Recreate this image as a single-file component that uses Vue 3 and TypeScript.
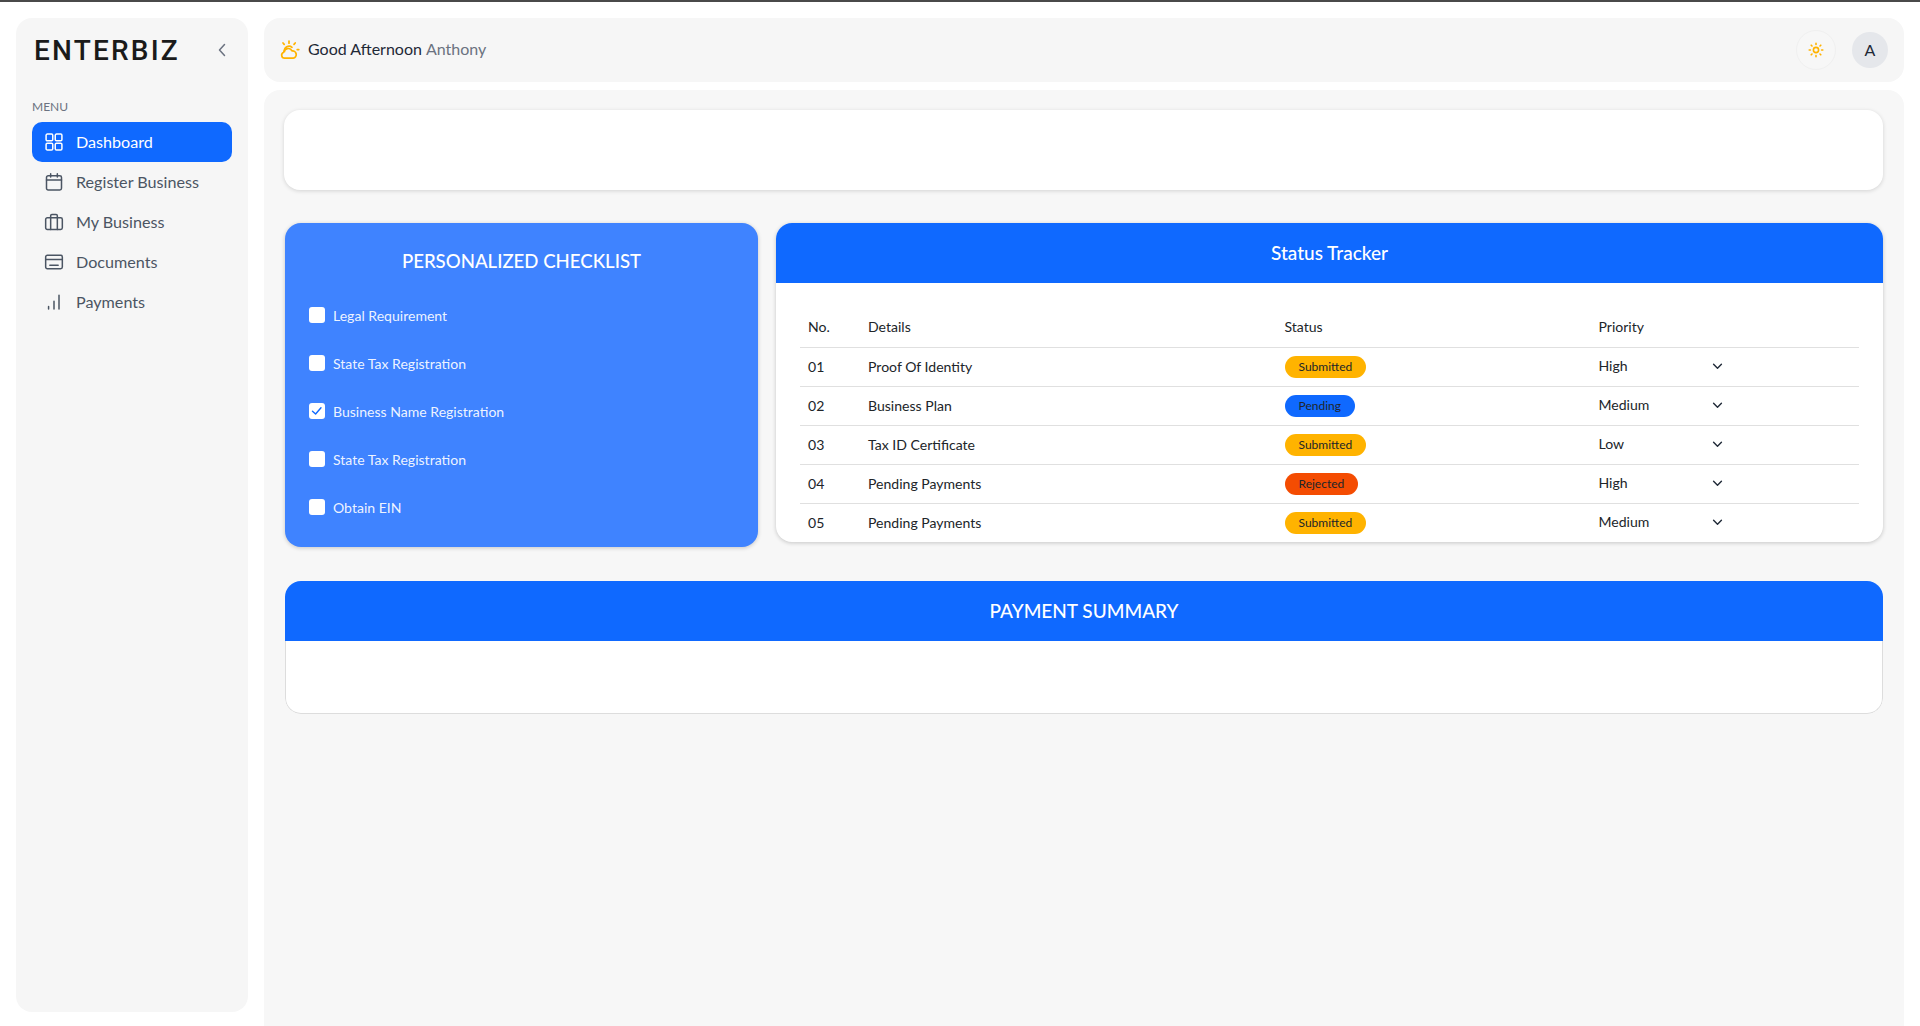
<script setup lang="ts">
const menu = [
  { label: 'Dashboard', icon: 'grid', active: true },
  { label: 'Register Business', icon: 'calendar' },
  { label: 'My Business', icon: 'case' },
  { label: 'Documents', icon: 'card' },
  { label: 'Payments', icon: 'bars' },
]

const checklist = [
  { label: 'Legal Requirement', done: false },
  { label: 'State Tax Registration', done: false },
  { label: 'Business Name Registration', done: true },
  { label: 'State Tax Registration', done: false },
  { label: 'Obtain EIN', done: false },
]

const rows = [
  { no: '01', details: 'Proof Of Identity', status: 'Submitted', priority: 'High' },
  { no: '02', details: 'Business Plan', status: 'Pending', priority: 'Medium' },
  { no: '03', details: 'Tax ID Certificate', status: 'Submitted', priority: 'Low' },
  { no: '04', details: 'Pending Payments', status: 'Rejected', priority: 'High' },
  { no: '05', details: 'Pending Payments', status: 'Submitted', priority: 'Medium' },
]
</script>

<template>
  <div class="page">
    <div class="topline"></div>
    <div class="shell">
      <aside class="sidebar">
        <div class="brand">
          <span class="logo">ENTERBIZ</span>
          <svg class="back" viewBox="0 0 10 14" fill="none" stroke="currentColor" stroke-width="1.5" stroke-linecap="round" stroke-linejoin="round">
            <path d="M7.5 1.5 2.5 7l5 5.5" />
          </svg>
        </div>
        <div class="menu-label">MENU</div>
        <nav class="menu">
          <a v-for="item in menu" :key="item.label" class="menu-item" :class="{ active: item.active }">
            <svg class="menu-icon" viewBox="0 0 24 24" fill="none" stroke="currentColor" stroke-width="1.8" stroke-linecap="round" stroke-linejoin="round">
              <template v-if="item.icon === 'grid'">
                <rect x="2.5" y="2.5" width="8" height="8" rx="1.5" />
                <rect x="13.5" y="2.5" width="8" height="8" rx="1.5" />
                <rect x="2.5" y="13.5" width="8" height="8" rx="1.5" />
                <rect x="13.5" y="13.5" width="8" height="8" rx="1.5" />
              </template>
              <template v-else-if="item.icon === 'calendar'">
                <rect x="3" y="4.5" width="18" height="17" rx="2" />
                <path d="M3 9.5h18M8 2v4M16 2v4" />
              </template>
              <template v-else-if="item.icon === 'case'">
                <rect x="2" y="7" width="20" height="14" rx="2" />
                <path d="M8 21V4.5A1.5 1.5 0 0 1 9.5 3h5A1.5 1.5 0 0 1 16 4.5V21" />
              </template>
              <template v-else-if="item.icon === 'card'">
                <rect x="2" y="4" width="20" height="16" rx="2" />
                <path d="M2 9h20M7 16h10" />
              </template>
              <template v-else>
                <path d="M5.5 17.5v3M12 11v9.5M18 4v16.5" />
              </template>
            </svg>
            <span class="menu-text">{{ item.label }}</span>
          </a>
        </nav>
      </aside>

      <div class="content">
        <header class="header">
          <div class="greeting">
            <svg class="weather" viewBox="0 0 20 20" fill="none" stroke="#ffb300" stroke-width="1.7" stroke-linecap="round" stroke-linejoin="round">
              <path d="M4.6 18.2a3.1 3.1 0 0 1-.9-6A4.4 4.4 0 0 1 12 11a3.6 3.6 0 0 1 1.2 7.2z" />
              <path d="M4.5 11.5a4.6 4.6 0 0 1 7.5-4.2" />
              <path d="M9 1v2.2M3 3l1.2 1.4M15.2 3 14 4.4M17.2 9.6h1.6" />
            </svg>
            <span class="hello">Good Afternoon</span>
            <span class="name">Anthony</span>
          </div>
          <div class="header-actions">
            <button class="theme-btn">
              <svg viewBox="0 0 16 16" fill="none" stroke="#ffb300" stroke-width="1.6" stroke-linecap="round">
                <circle cx="8" cy="8" r="2.6" />
                <path d="M8 1.2v1.2M8 13.6v1.2M1.2 8h1.2M13.6 8h1.2M3.2 3.2l.8.8M12 12l.8.8M3.2 12.8l.8-.8M12 4l.8-.8" />
              </svg>
            </button>
            <div class="avatar">A</div>
          </div>
        </header>

        <main class="main">
          <div class="banner"></div>

          <div class="cards">
            <section class="checklist">
              <h3>PERSONALIZED CHECKLIST</h3>
              <label v-for="(task, i) in checklist" :key="i" class="task">
                <span class="box">
                  <svg v-if="task.done" viewBox="0 0 16 16" fill="none" stroke="#0f69ff" stroke-width="1.4" stroke-linecap="round" stroke-linejoin="round">
                    <path d="M3.5 8.2 6.6 11 12 4.8" />
                  </svg>
                </span>
                {{ task.label }}
              </label>
            </section>

            <section class="tracker">
              <div class="card-head">Status Tracker</div>
              <div class="table-wrap">
                <table>
                  <colgroup>
                    <col class="col-no" />
                    <col class="col-details" />
                    <col class="col-status" />
                    <col />
                  </colgroup>
                  <thead>
                    <tr>
                      <th>No.</th>
                      <th>Details</th>
                      <th>Status</th>
                      <th>Priority</th>
                    </tr>
                  </thead>
                  <tbody>
                    <tr v-for="row in rows" :key="row.no">
                      <td>{{ row.no }}</td>
                      <td>{{ row.details }}</td>
                      <td class="status-cell"><span class="badge" :class="row.status.toLowerCase()">{{ row.status }}</span></td>
                      <td>
                        <div class="priority">
                          <span>{{ row.priority }}</span>
                          <svg viewBox="0 0 12 8" fill="none" stroke="#1f2937" stroke-width="1.6" stroke-linecap="round" stroke-linejoin="round">
                            <path d="M1.5 1.5 6 6l4.5-4.5" />
                          </svg>
                        </div>
                      </td>
                    </tr>
                  </tbody>
                </table>
              </div>
            </section>
          </div>

          <section class="payment">
            <div class="card-head">PAYMENT SUMMARY</div>
            <div class="payment-body"></div>
          </section>
        </main>
      </div>
    </div>
  </div>
</template>

<style scoped>
.page {
  display: flex;
  flex-direction: column;
  height: 100vh;
  overflow: hidden;
  background: #fff;
  color: #212529;
  font-family: Lato, "Noto Sans", sans-serif;
}

.topline {
  height: 2px;
  flex: none;
  background: #4a4a4a;
}

.shell {
  flex: 1;
  display: flex;
  gap: 16px;
  min-height: 0;
  padding: 16px 16px 0;
}

.sidebar {
  width: 232px;
  flex: none;
  box-sizing: border-box;
  margin-bottom: 14px;
  padding: 0 16px;
  border-radius: 16px;
  background: #f6f6f6;
}

.brand {
  display: flex;
  align-items: center;
  justify-content: space-between;
  height: 64px;
  padding: 0 5px 0 2px;
}

.logo {
  font-family: Roboto, sans-serif;
  font-size: 28px;
  font-weight: 500;
  letter-spacing: 2.2px;
  color: #1a1a1a;
}

.back {
  width: 10px;
  height: 14px;
  color: #6b7280;
}

.menu-label {
  margin-top: 15px;
  height: 25px;
  line-height: 20px;
  font-size: 12px;
  color: #6b7280;
}

.menu {
  display: flex;
  flex-direction: column;
}

.menu-item {
  display: flex;
  align-items: center;
  gap: 12px;
  height: 40px;
  padding: 0 12px;
  border-radius: 10px;
  font-size: 16.15px;
  color: #4b5563;
}

.menu-text {
  margin-top: -2px;
}

.menu-item.active {
  background: #0f69ff;
  color: #fff;
}

.menu-icon {
  width: 20px;
  height: 20px;
  flex: none;
}

.content {
  flex: 1;
  min-width: 0;
  display: flex;
  flex-direction: column;
  gap: 8px;
}

.header {
  display: flex;
  align-items: center;
  justify-content: space-between;
  height: 64px;
  flex: none;
  padding: 0 16px;
  border-radius: 16px;
  background: #f6f6f6;
}

.greeting {
  display: flex;
  align-items: center;
  font-size: 16px;
  line-height: 18px;
}

.weather {
  width: 20px;
  height: 20px;
  margin-right: 8px;
}

.hello {
  color: #1f2937;
  margin: -2px 4px 0 0;
}

.name {
  margin-top: -2px;
  color: #6b7280;
}

.header-actions {
  display: flex;
  align-items: center;
  gap: 16px;
}

.theme-btn {
  display: flex;
  align-items: center;
  justify-content: center;
  width: 40px;
  height: 40px;
  padding: 0;
  border: 1px solid #f0f0f0;
  border-radius: 50%;
  background: #f7f7f7;
}

.theme-btn svg {
  width: 16px;
  height: 16px;
}

.avatar {
  display: flex;
  align-items: center;
  justify-content: center;
  width: 36px;
  height: 36px;
  padding-bottom: 2px;
  box-sizing: border-box;
  border-radius: 50%;
  background: #e5e7eb;
  color: #1f2937;
  font-size: 16px;
}

.main {
  flex: 1;
  box-sizing: border-box;
  padding: 20px 21px 0 20px;
  border-radius: 16px 16px 0 0;
  background: #f7f7f7;
}

.banner {
  height: 80px;
  border-radius: 16px;
  background: #fff;
  box-shadow: 0 1px 4px rgba(0, 0, 0, 0.15);
}

.cards {
  display: flex;
  align-items: flex-start;
  gap: 18px;
  margin: 33px 0 0 1px;
}

.checklist {
  width: 473px;
  flex: none;
  box-sizing: border-box;
  height: 324px;
  padding: 24px 24px 16px;
  border-radius: 16px;
  background: #3f83ff;
  color: #fff;
  box-shadow: 0 1px 4px rgba(0, 0, 0, 0.2);
}

.checklist h3 {
  margin: 0 0 16px;
  font-size: 18.6px;
  line-height: 28px;
  font-weight: 500;
  text-align: center;
}

.task {
  display: flex;
  align-items: center;
  gap: 8px;
  height: 48px;
  font-size: 14.05px;
  color: rgba(255, 255, 255, 0.92);
}

.box {
  display: flex;
  width: 16px;
  height: 16px;
  flex: none;
  border-radius: 3px;
  background: #fff;
}

.tracker {
  flex: 1;
  min-width: 0;
  height: 319px;
  overflow: hidden;
  border-radius: 16px;
  background: #fff;
  box-shadow: 0 1px 4px rgba(0, 0, 0, 0.2);
}

.card-head {
  height: 60px;
  line-height: 60px;
  background: #0f69ff;
  color: #fff;
  font-size: 19px;
  font-weight: 500;
  text-align: center;
}

.table-wrap {
  padding: 24px 24px 0;
}

table {
  width: 100%;
  border-collapse: collapse;
  table-layout: fixed;
  font-size: 14.05px;
}

.col-no {
  width: 60px;
}

.col-details {
  width: 416.5px;
}

.col-status {
  width: 314px;
}

th,
td {
  padding: 0 8px;
  text-align: left;
  font-weight: 400;
  color: #212529;
}

th {
  height: 38px;
  padding-bottom: 2px;
  vertical-align: middle;
}

td {
  height: 36px;
  padding-bottom: 2px;
  border-top: 1px solid #e0e0e0;
}

td.status-cell {
  padding-bottom: 0;
}

.badge {
  display: inline-block;
  height: 22px;
  line-height: 22px;
  padding: 0 14px;
  border-radius: 11px;
  font-size: 12px;
  color: #212529;
  vertical-align: middle;
}

.badge.submitted {
  background: #ffb300;
}

.badge.pending {
  background: #0f69ff;
}

.badge.rejected {
  background: #f44c02;
}

.priority {
  display: flex;
  align-items: center;
  justify-content: space-between;
  width: 124px;
  margin-top: -2px;
}

.priority svg {
  width: 11px;
  height: 7px;
  margin-top: 2px;
}

.payment {
  margin: 34px 0 0 1px;
  overflow: hidden;
  border-radius: 16px;
  background: #fff;
}

.payment-body {
  box-sizing: border-box;
  height: 73px;
  border: 1px solid #ddd;
  border-top: none;
  border-radius: 0 0 16px 16px;
}
</style>

<style>
html,
body {
  margin: 0;
  background: #fff;
}
</style>
